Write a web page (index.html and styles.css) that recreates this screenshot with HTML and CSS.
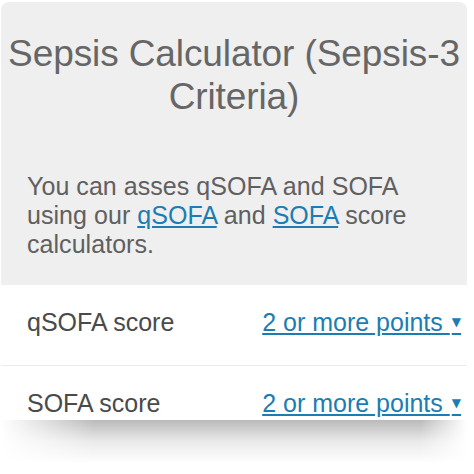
FILE: index.html
```html
<!DOCTYPE html>
<html>
<head>
  <link rel="stylesheet" href="styles.css">
</head>
<body>
  <div class="card">
    <div class="head">
      <h1 class="title">Sepsis Calculator (Sepsis-3 Criteria)</h1>
      <p class="intro">You can asses qSOFA and SOFA<br>
        using our <a href="#">qSOFA</a> and <a href="#">SOFA</a> score<br>
        calculators.</p>
    </div>
    <div class="row">
      <span class="label">qSOFA score</span>
      <a class="pick" href="#">2 or more points <span class="caret">&#9660;</span></a>
    </div>
    <div class="row">
      <span class="label">SOFA score</span>
      <a class="pick" href="#">2 or more points <span class="caret">&#9660;</span></a>
    </div>
  </div>
  <div class="shade"></div>
</body>
</html>
```

FILE: styles.css
```css
body {
  margin: 0;
  background: #fff;
  font-family: "Liberation Sans", Arial, sans-serif;
}

.card {
  margin: 2px 0 0 1px;
  width: 466px;
  height: 418px;
  overflow: hidden;
  border-radius: 8px 8px 0 0;
  background: #fff;
}

.head {
  background: #efefef;
  padding: 30px 26px 26px 26px;
}

.title {
  margin: 0 -20px;
  font-size: 37px;
  letter-spacing: -0.1px;
  line-height: 43px;
  font-weight: normal;
  text-align: center;
  color: #666;
}

.intro {
  margin: 54px 0 0 0;
  font-size: 25px;
  letter-spacing: 0.05px;
  line-height: 29px;
  color: #606060;
}

.intro a,
.pick {
  color: #1b7db3;
}

.row {
  display: flex;
  justify-content: space-between;
  align-items: center;
  padding: 22px 6px 28px 26px;
  border-bottom: 1px solid #ececec;
  font-size: 25px;
  line-height: 30px;
}

.label {
  color: #4a4a4a;
}

.caret {
  font-family: "DejaVu Sans", sans-serif;
  font-size: 12px;
  vertical-align: 5px;
  margin-left: 2px;
}

/* soft shadow under the cut-off card */
.shade {
  width: 466px;
  height: 44px;
  margin-left: 1px;
  background: linear-gradient(rgba(0, 0, 0, 0.27), rgba(0, 0, 0, 0.08) 50%, rgba(0, 0, 0, 0));
  -webkit-mask-image: linear-gradient(to right, transparent 0, #000 20%, #000 90%, transparent 100%);
  mask-image: linear-gradient(to right, transparent 0, #000 20%, #000 90%, transparent 100%);
}
```
